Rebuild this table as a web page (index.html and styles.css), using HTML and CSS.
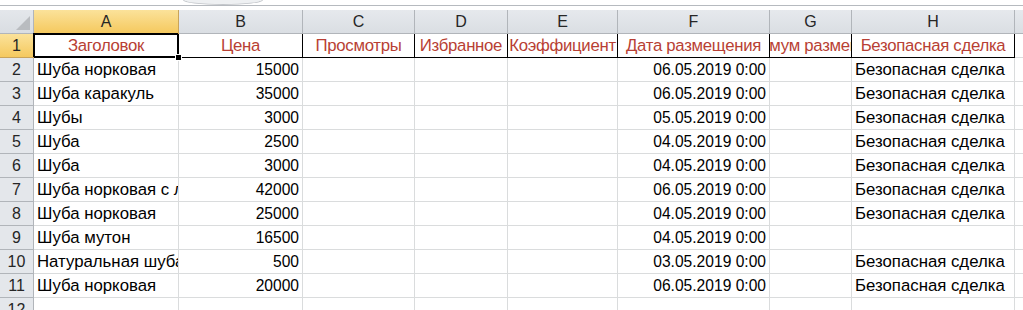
FILE: index.html
```html
<!DOCTYPE html>
<html lang="ru">
<head>
<meta charset="utf-8">
<title>Лист1</title>
<link rel="stylesheet" href="styles.css">
</head>
<body>
<div class="topbar"><div class="bump"></div></div>
<div class="sheet">
  <div class="corner"><svg width="14" height="14" viewBox="0 0 14 14"><polygon points="14,0 14,14 0,14" fill="#b9bcc0"/></svg></div>
  <div class="ch sel">A</div><div class="ch">B</div><div class="ch">C</div><div class="ch">D</div><div class="ch">E</div><div class="ch">F</div><div class="ch">G</div><div class="ch">H</div><div class="ch last"></div>

  <div class="rh sel">1</div>
  <div class="c h1 act"><span>Заголовок</span><i class="handle"></i></div><div class="c h1"><span>Цена</span></div><div class="c h1"><span>Просмотры</span></div><div class="c h1"><span>Избранное</span></div><div class="c h1"><span>Коэффициент</span></div><div class="c h1"><span>Дата размещения</span></div><div class="c h1"><span>Максимум размещения</span></div><div class="c h1"><span>Безопасная сделка</span></div><div class="c e"></div>

  <div class="rh">2</div>
  <div class="c">Шуба норковая</div><div class="c n">15000</div><div class="c"></div><div class="c"></div><div class="c"></div><div class="c n">06.05.2019 0:00</div><div class="c"></div><div class="c">Безопасная сделка</div><div class="c e"></div>

  <div class="rh">3</div>
  <div class="c">Шуба каракуль</div><div class="c n">35000</div><div class="c"></div><div class="c"></div><div class="c"></div><div class="c n">06.05.2019 0:00</div><div class="c"></div><div class="c">Безопасная сделка</div><div class="c e"></div>

  <div class="rh">4</div>
  <div class="c">Шубы</div><div class="c n">3000</div><div class="c"></div><div class="c"></div><div class="c"></div><div class="c n">05.05.2019 0:00</div><div class="c"></div><div class="c">Безопасная сделка</div><div class="c e"></div>

  <div class="rh">5</div>
  <div class="c">Шуба</div><div class="c n">2500</div><div class="c"></div><div class="c"></div><div class="c"></div><div class="c n">04.05.2019 0:00</div><div class="c"></div><div class="c">Безопасная сделка</div><div class="c e"></div>

  <div class="rh">6</div>
  <div class="c">Шуба</div><div class="c n">3000</div><div class="c"></div><div class="c"></div><div class="c"></div><div class="c n">04.05.2019 0:00</div><div class="c"></div><div class="c">Безопасная сделка</div><div class="c e"></div>

  <div class="rh">7</div>
  <div class="c">Шуба норковая с лисой</div><div class="c n">42000</div><div class="c"></div><div class="c"></div><div class="c"></div><div class="c n">06.05.2019 0:00</div><div class="c"></div><div class="c">Безопасная сделка</div><div class="c e"></div>

  <div class="rh">8</div>
  <div class="c">Шуба норковая</div><div class="c n">25000</div><div class="c"></div><div class="c"></div><div class="c"></div><div class="c n">04.05.2019 0:00</div><div class="c"></div><div class="c">Безопасная сделка</div><div class="c e"></div>

  <div class="rh">9</div>
  <div class="c">Шуба мутон</div><div class="c n">16500</div><div class="c"></div><div class="c"></div><div class="c"></div><div class="c n">04.05.2019 0:00</div><div class="c"></div><div class="c"></div><div class="c e"></div>

  <div class="rh">10</div>
  <div class="c">Натуральная шуба</div><div class="c n">500</div><div class="c"></div><div class="c"></div><div class="c"></div><div class="c n">03.05.2019 0:00</div><div class="c"></div><div class="c">Безопасная сделка</div><div class="c e"></div>

  <div class="rh">11</div>
  <div class="c">Шуба норковая</div><div class="c n">20000</div><div class="c"></div><div class="c"></div><div class="c"></div><div class="c n">06.05.2019 0:00</div><div class="c"></div><div class="c">Безопасная сделка</div><div class="c e"></div>

  <div class="rh">12</div>
  <div class="c"></div><div class="c"></div><div class="c"></div><div class="c"></div><div class="c"></div><div class="c"></div><div class="c"></div><div class="c"></div><div class="c e"></div>
</div>
</body>
</html>
```

FILE: styles.css
```css
html, body {
  margin: 0;
  padding: 0;
  background: #ffffff;
  overflow: hidden;
}
body {
  width: 1023px;
  height: 310px;
  font-family: "Liberation Sans", "Noto Sans", sans-serif;
  font-size: 16.8px;
  color: #000;
}
.topbar {
  height: 5px;
  border-bottom: 1px solid #b6babf;
  margin-bottom: 4px;
  display: flex;
}
.bump {
  margin-left: 183px;
  width: 80px;
  height: 5px;
  box-sizing: border-box;
  border: 1px solid #c3c6ca;
  border-top: none;
  border-radius: 0 0 40px 40px / 0 0 5px 5px;
  background: #eef0f2;
}
.sheet {
  display: grid;
  grid-template-columns: 34px 145px 124px 112px 93px 110px 152px 82px 163px 1fr;
  grid-auto-rows: 24px;
}
.corner {
  background: linear-gradient(#e4e7eb, #d9dde2);
  border-right: 1px solid #b1b5ba;
  border-bottom: 1px solid #b1b5ba;
  display: flex;
  align-items: flex-end;
  justify-content: flex-end;
  padding: 0 3px 3px 0;
  box-sizing: border-box;
}
.ch, .rh {
  box-sizing: border-box;
  background: linear-gradient(#e6e9ed, #dadee3);
  border-right: 1px solid #b1b5ba;
  border-bottom: 1px solid #b1b5ba;
  color: #262626;
  display: flex;
  align-items: center;
  justify-content: center;
  font-size: 16px;
}
.ch {
  padding-top: 1px;
}
.ch.last {
  border-right: none;
}
.rh {
  background: #e4e7eb;
}
.ch.sel, .rh.sel {
  background: linear-gradient(#fbe29a, #f5c95f);
  border-bottom-color: #e8a33c;
  border-right-color: #c9a45a;
}
.rh.sel {
  border-bottom-color: #c9a45a;
  border-right-color: #e8a33c;
}
.c {
  box-sizing: border-box;
  border-right: 1px solid #dadcdd;
  border-bottom: 1px solid #dadcdd;
  padding: 0 3px;
  display: flex;
  align-items: center;
  white-space: nowrap;
  overflow: hidden;
  position: relative;
}
.c.n {
  justify-content: flex-end;
  font-size: 15.6px;
}
.c.e {
  border-right: none;
}
.c.h1 {
  color: #b83f34;
  justify-content: center;
  border-right: 1px solid #000;
  border-bottom: 1px solid #000;
  padding: 0;
  letter-spacing: -0.3px;
}
.c.h1 span {
  flex: none;
}
.c.act {
  overflow: visible;
  box-shadow: inset 0 0 0 1px #000, -1px -1px 0 0 #000;
}
.handle {
  position: absolute;
  right: -4px;
  bottom: -4px;
  width: 5px;
  height: 5px;
  background: #000;
  border: 1px solid #fff;
  z-index: 2;
}
```
